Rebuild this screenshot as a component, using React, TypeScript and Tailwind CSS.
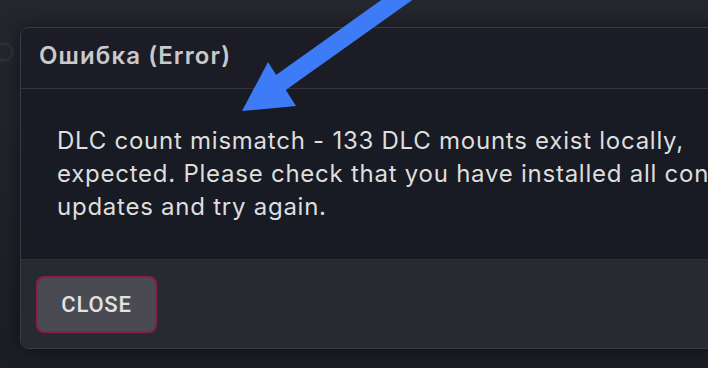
import type React from "react";

const Arrow: React.FC = () => (
  <svg
    className="pointer-events-none absolute left-0 top-0"
    width={708}
    height={368}
    viewBox="0 0 708 368"
  >
    <line x1={408} y1={-8} x2={276} y2={86} stroke="#3d7bf7" strokeWidth={18} />
    <polygon points="242,111 268,62 296,106" fill="#3d7bf7" />
  </svg>
);

export default function App() {
  return (
    <div
      className="relative h-[368px] w-[708px] overflow-hidden bg-gradient-to-b from-[#25272e] to-[#1d1e24]"
      style={{ fontFamily: "Inter, 'Noto Sans', sans-serif" }}
    >
      {/* faint page content behind the dialog */}
      <div className="absolute -left-[6px] top-[42px] h-[20px] w-[20px] rounded-full border-[3px] border-[#2e3037]" />

      <div className="relative ml-[20px] mt-[27px] flex w-[800px] flex-col overflow-hidden rounded-[9px] border border-[#3a3c45] shadow-[0_0_20px_rgba(0,0,0,0.5)]">
        <div className="flex h-[61px] items-center border-b border-[#33353d] bg-[#1b1c25] pb-[5px] pl-[18px]">
          <h2 className="text-[24px] font-semibold tracking-[1.1px] text-[#c9c9cb]">Ошибка (Error)</h2>
        </div>

        <div className="flex h-[170px] flex-col bg-[#181a24] pl-[36px] pt-[35px] text-[24px] leading-[33px] tracking-[0.75px] text-[#dedede]">
          <p className="whitespace-nowrap">DLC count mismatch - 133 DLC mounts exist locally,</p>
          <p className="whitespace-nowrap">expected. Please check that you have installed all content</p>
          <p className="whitespace-nowrap">updates and try again.</p>
        </div>

        <div className="flex h-[89px] items-center border-t border-[#2e3038] bg-[#282a32] pl-[15px]">
          <button
            className="flex h-[57px] w-[121px] items-center justify-center rounded-[8px] border-2 border-[#8a1d4a] bg-[#4a4b52] text-[22px] font-medium tracking-[0.8px] text-[#e2e2e2]"
            style={{ fontFamily: "Roboto, sans-serif" }}
          >
            CLOSE
          </button>
        </div>
      </div>

      <Arrow />
    </div>
  );
}
